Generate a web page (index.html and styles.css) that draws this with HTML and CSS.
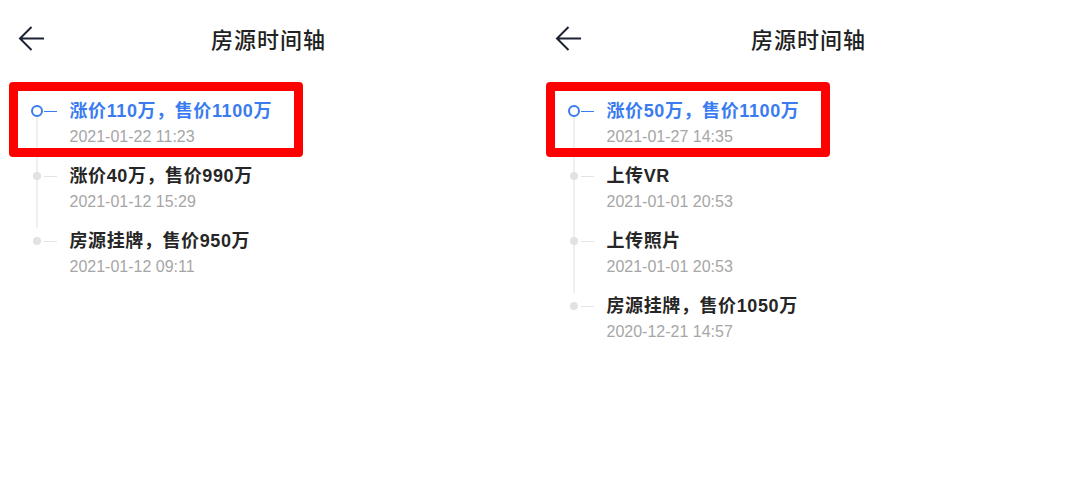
FILE: index.html
```html
<!DOCTYPE html>
<html>

<head>
	<title>房源时间轴</title>
	<meta charset="utf-8">
	<link rel="stylesheet" href="styles.css">
</head>

<body>
	<div class="screens">

		<div class="screen">
			<div class="topbar">
				<span class="back">
					<svg width="28" height="28" viewBox="0 0 28 28"><path d="M26 13.5H2.5M13.5 2 2 13.5 13.5 25" fill="none" stroke="#1d2232" stroke-width="2"/></svg>
				</span>
				<span class="title">房源时间轴</span>
				<span></span>
			</div>
			<div class="timeline">
				<div class="item active marked">
					<div class="mark"><span class="dot"></span><span class="dash"></span></div>
					<div class="body">
						<div class="what">涨价110万，售价1100万</div>
						<div class="when">2021-01-22 11:23</div>
					</div>
				</div>
				<div class="item">
					<div class="mark"><span class="dot"></span><span class="dash"></span></div>
					<div class="body">
						<div class="what">涨价40万，售价990万</div>
						<div class="when">2021-01-12 15:29</div>
					</div>
				</div>
				<div class="item">
					<div class="mark"><span class="dot"></span><span class="dash"></span></div>
					<div class="body">
						<div class="what">房源挂牌，售价950万</div>
						<div class="when">2021-01-12 09:11</div>
					</div>
				</div>
			</div>
		</div>

		<div class="screen">
			<div class="topbar">
				<span class="back">
					<svg width="28" height="28" viewBox="0 0 28 28"><path d="M26 13.5H2.5M13.5 2 2 13.5 13.5 25" fill="none" stroke="#1d2232" stroke-width="2"/></svg>
				</span>
				<span class="title">房源时间轴</span>
				<span></span>
			</div>
			<div class="timeline">
				<div class="item active marked">
					<div class="mark"><span class="dot"></span><span class="dash"></span></div>
					<div class="body">
						<div class="what">涨价50万，售价1100万</div>
						<div class="when">2021-01-27 14:35</div>
					</div>
				</div>
				<div class="item">
					<div class="mark"><span class="dot"></span><span class="dash"></span></div>
					<div class="body">
						<div class="what">上传VR</div>
						<div class="when">2021-01-01 20:53</div>
					</div>
				</div>
				<div class="item">
					<div class="mark"><span class="dot"></span><span class="dash"></span></div>
					<div class="body">
						<div class="what">上传照片</div>
						<div class="when">2021-01-01 20:53</div>
					</div>
				</div>
				<div class="item">
					<div class="mark"><span class="dot"></span><span class="dash"></span></div>
					<div class="body">
						<div class="what">房源挂牌，售价1050万</div>
						<div class="when">2020-12-21 14:57</div>
					</div>
				</div>
			</div>
		</div>

	</div>
</body>

</html>
```

FILE: styles.css
```css
body{
	margin: 0;
	background: #fff;
	font-family: "Noto Sans CJK SC", "Noto Sans", sans-serif;
	color: #262626;
}

.screens{
	display: grid;
	grid-template-columns: 537px 543px;
	height: 482px;
}

.topbar{
	display: grid;
	grid-template-columns: 1fr auto 1fr;
	align-items: center;
	height: 76px;
}

.back{
	display: flex;
	margin-left: 18px;
	margin-top: 2px;
}

.title{
	font-size: 22px;
	font-weight: 500;
	letter-spacing: 1px;
	color: #222;
}

.timeline{
	padding: 22px 0 0 31px;
}

.item{
	position: relative;
	display: flex;
	width: fit-content;
}

.body{
	padding-bottom: 15px;
}

.mark{
	display: flex;
	align-items: flex-start;
	width: 38.5px;
	flex: none;
	background: linear-gradient(#efefef, #efefef) no-repeat 5px 0 / 2px 100%;
}
.item:first-child .mark{
	background-position: 5px 13px;
}
.item:last-child .mark{
	background: none;
}

.dot{
	box-sizing: border-box;
	width: 8px;
	height: 8px;
	margin: 9px 2px 0 2px;
	border-radius: 50%;
	background: #e2e2e2;
}
.dash{
	width: 13px;
	height: 1px;
	margin: 13px 0 0 1px;
	background: #e4e4e4;
}

.active .dot{
	width: 12px;
	height: 12px;
	margin: 7px 0 0 0;
	border: 2px solid #3a7cf0;
	background: #fff;
}
.active .dash{
	margin-top: 12.5px;
	height: 1.5px;
	background: #3a7cf0;
}

.what{
	font-family: "Liberation Sans", "Noto Sans CJK SC", sans-serif;
	font-size: 18px;
	font-weight: 600;
	letter-spacing: 0.6px;
	line-height: 26px;
	color: #262626;
}
.active .what{
	color: #3a7cf0;
}

.when{
	margin-top: 2px;
	font-family: "Liberation Sans", "Noto Sans CJK SC", sans-serif;
	font-size: 16px;
	line-height: 22px;
	color: #a6a6a6;
}

/* red annotation frame around the latest entry */
.marked::after{
	content: "";
	position: absolute;
	top: -16px;
	left: -22px;
	right: -31px;
	bottom: 6px;
	border: 9px solid #ff0000;
	border-radius: 4px;
	pointer-events: none;
}
```
